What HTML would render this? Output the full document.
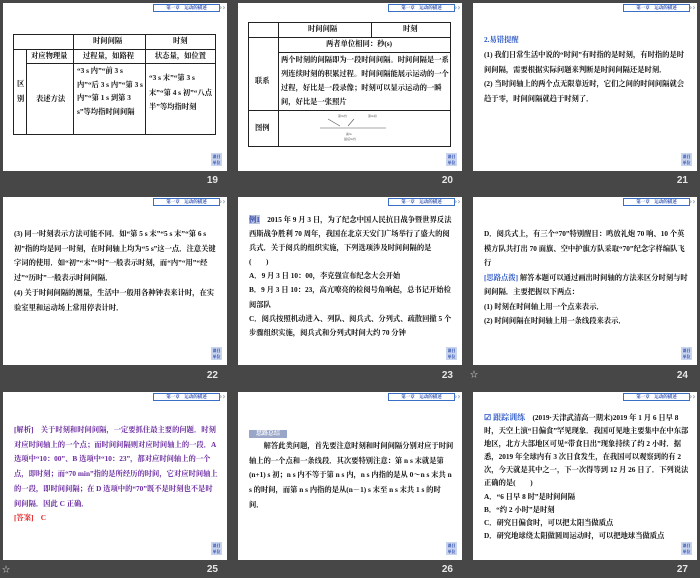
<!DOCTYPE html>
<html><head><meta charset="utf-8"><style>
*{margin:0;padding:0;box-sizing:border-box}
body{width:700px;height:578px;background:#474747;position:relative;overflow:hidden;font-family:"Liberation Serif","Noto Serif CJK SC","Noto Sans CJK SC",serif;}
.s{position:absolute;width:224px;height:168px;background:#fff;overflow:hidden;color:#111;font-weight:bold;font-size:7.3px}
.n{position:absolute;width:40px;text-align:right;color:#e8e8e8;font:bold 10px "Liberation Sans",sans-serif}
.bd{position:absolute;left:150px;top:1px;width:67px;height:8px;border:1px solid #3a6fc8;background:#fff;color:#2244aa;font-size:4.5px;line-height:6px;text-align:center}
.ch{position:absolute;left:216px;top:0px;color:#9ab;font-size:8px;line-height:9px;font-family:"DejaVu Sans",sans-serif}
.ic{position:absolute;left:208px;top:150px;width:11px;height:13px;background:#c9d4ee;color:#2244aa;font-size:4px;line-height:5.5px;text-align:center;padding-top:1px}
.t{position:absolute;line-height:14.7px}
.l{position:absolute;background:#222}
.p{color:#6a2aa0}
.b{color:#2a56c6}
.r{color:#e02020}
</style></head><body>

<!-- 19 -->
<div class="s" style="left:3px;top:3px">
<div class="bd">第一章　运动的描述</div><div class="ch">››</div><div class="ic">课目<br>单位</div>
<div style="position:absolute;left:10px;top:31px;width:203px;height:101px;border:1px solid #222"></div>
<div class="l" style="left:70px;top:31px;width:1px;height:101px"></div>
<div class="l" style="left:142px;top:31px;width:1px;height:101px"></div>
<div class="l" style="left:10px;top:46px;width:203px;height:1px"></div>
<div class="l" style="left:23px;top:60px;width:190px;height:1px"></div>
<div class="l" style="left:23px;top:46px;width:1px;height:86px"></div>
<div class="t" style="left:90px;top:31px">时间间隔</div>
<div class="t" style="left:170px;top:31px">时刻</div>
<div class="t" style="left:28px;top:46px">对应物理量</div>
<div class="t" style="left:80px;top:46px">过程量，如路程</div>
<div class="t" style="left:152px;top:46px">状态量，如位置</div>
<div class="t" style="left:14px;top:74px;width:8px">区<br>别</div>
<div class="t" style="left:33px;top:89px">表述方法</div>
<div class="t" style="left:74px;top:61px;width:68px;line-height:13.5px">“3 s 内”“前 3 s 内”“后 3 s 内”“第 3 s 内”“第 1 s 到第 3 s”等均指时间间隔</div>
<div class="t" style="left:146px;top:68px;width:66px;line-height:14.5px">“3 s 末”“第 3 s 末”“第 4 s 初”“八点半”等均指时刻</div>
</div>
<div class="n" style="left:178px;top:175px">19</div>

<!-- 20 -->
<div class="s" style="left:238px;top:3px">
<div class="bd">第一章　运动的描述</div><div class="ch">››</div><div class="ic">课目<br>单位</div>
<div style="position:absolute;left:10px;top:19px;width:203px;height:125px;border:1px solid #222"></div>
<div class="l" style="left:40px;top:19px;width:1px;height:125px"></div>
<div class="l" style="left:133px;top:19px;width:1px;height:15px"></div>
<div class="l" style="left:10px;top:34px;width:203px;height:1px"></div>
<div class="l" style="left:40px;top:49px;width:173px;height:1px"></div>
<div class="l" style="left:10px;top:107px;width:203px;height:1px"></div>
<div class="t" style="left:70px;top:19px">时间间隔</div>
<div class="t" style="left:165px;top:19px">时刻</div>
<div class="t" style="left:88px;top:34px">两者单位相同：秒(s)</div>
<div class="t" style="left:17px;top:71px">联系</div>
<div class="t" style="left:43px;top:50px;width:170px;line-height:14px">两个时刻的间隔即为一段时间间隔。时间间隔是一系列连续时刻的积累过程。时间间隔能展示运动的一个过程，好比是一段录像；时刻可以显示运动的一瞬间，好比是一张照片</div>
<div class="t" style="left:17px;top:118px">图例</div>
<svg style="position:absolute;left:80px;top:110px" width="70" height="32"><g stroke="#555" stroke-width=".6"><line x1="2" y1="15" x2="68" y2="15"/><line x1="10" y1="6" x2="22" y2="13"/><line x1="30" y1="13" x2="36" y2="6"/></g><g fill="#777" font-size="3"><text x="20" y="4">第3s内</text><text x="50" y="4">第4s初</text><text x="28" y="22">前3s</text><text x="26" y="27">最后3s内</text></g></svg>
</div>
<div class="n" style="left:413px;top:175px">20</div>

<!-- 21 -->
<div class="s" style="left:473px;top:3px">
<div class="bd">第一章　运动的描述</div><div class="ch">››</div><div class="ic">课目<br>单位</div>
<div class="t b" style="left:11px;top:30px">2.易错提醒</div>
<div class="t" style="left:11px;top:45px;width:205px">(1) 我们日常生活中说的“时间”有时指的是时刻，有时指的是时间间隔，需要根据实际问题来判断是时间间隔还是时刻．<br>(2) 当时间轴上的两个点无限靠近时，它们之间的时间间隔就会趋于零，时间间隔就趋于时刻了．</div>
</div>
<div class="n" style="left:648px;top:175px">21</div>

<!-- 22 -->
<div class="s" style="left:3px;top:197px">
<div class="bd">第一章　运动的描述</div><div class="ch">››</div><div class="ic">课目<br>单位</div>
<div class="t" style="left:11px;top:30px;width:205px">(3) 同一时刻表示方法可能不同．如“第 5 s 末”“5 s 末”“第 6 s 初”指的均是同一时刻，在时间轴上均为“5 s”这一点．注意关键字词的使用．如“初”“末”“时”一般表示时刻，而“内”“用”“经过”“历时”一般表示时间间隔．<br>(4) 关于时间间隔的测量，生活中一般用各种钟表来计时，在实验室里和运动场上常用停表计时．</div>
</div>
<div class="n" style="left:178px;top:370px">22</div>

<!-- 23 -->
<div class="s" style="left:238px;top:197px">
<div class="bd">第一章　运动的描述</div><div class="ch">››</div><div class="ic">课目<br>单位</div>
<div class="t" style="left:11px;top:16px;width:205px;line-height:14.1px"><span style="background:#b8c4e0;color:#34a">例1</span>　2015 年 9 月 3 日，为了纪念中国人民抗日战争暨世界反法西斯战争胜利 70 周年，我国在北京天安门广场举行了盛大的阅兵式．关于阅兵的组织实施，下列选项涉及时间间隔的是<br>(　　)<br>A．9 月 3 日 10：00，李克强宣布纪念大会开始<br>B．9 月 3 日 10：23，高亢嘹亮的检阅号角响起，总书记开始检阅部队<br>C．阅兵按照机动进入、列队、阅兵式、分列式、疏散回撤 5 个步骤组织实施，阅兵式和分列式时间大约 70 分钟</div>
</div>
<div class="n" style="left:413px;top:370px">23</div>

<!-- 24 -->
<div class="s" style="left:473px;top:197px">
<div class="bd">第一章　运动的描述</div><div class="ch">››</div><div class="ic">课目<br>单位</div>
<div class="t" style="left:11px;top:30px;width:205px;line-height:14.5px">D．阅兵式上，有三个“70”特别醒目：鸣放礼炮 70 响、10 个英模方队共打出 70 面旗、空中护旗方队采取“70”纪念字样编队飞行<br><span class="b">[思路点拨]</span> 解答本题可以通过画出时间轴的方法来区分时刻与时间间隔．主要把握以下两点：<br>(1) 时刻在时间轴上用一个点来表示．<br>(2) 时间间隔在时间轴上用一条线段来表示．</div>
</div>
<div class="n" style="left:648px;top:370px">24</div>

<!-- 25 -->
<div class="s" style="left:3px;top:392px">
<div class="bd">第一章　运动的描述</div><div class="ch">››</div><div class="ic">课目<br>单位</div>
<div class="t p" style="left:11px;top:31px;width:205px">[解析]　关于时刻和时间间隔，一定要抓住最主要的问题．时刻对应时间轴上的一个点；而时间间隔则对应时间轴上的一段．A 选项中“10：00”、B 选项中“10：23”，都对应时间轴上的一个点，即时刻；而“70 min”指的是所经历的时间，它对应时间轴上的一段，即时间间隔；在 D 选项中的“70”既不是时刻也不是时间间隔．因此 C 正确．<br><span class="r">[答案]　C</span></div>
</div>
<div class="n" style="left:178px;top:564px">25</div>

<!-- 26 -->
<div class="s" style="left:238px;top:392px">
<div class="bd">第一章　运动的描述</div><div class="ch">››</div><div class="ic">课目<br>单位</div>
<div style="position:absolute;left:11px;top:38px;width:38px;height:8px;background:#9aa6c8;color:#fff;font-size:6px;line-height:8px;text-align:center">思路总结</div>
<div class="t" style="left:11px;top:47px;width:205px">　　解答此类问题，首先要注意时刻和时间间隔分别对应于时间轴上的一个点和一条线段．其次要特别注意：第 n s 末就是第(n+1) s 初；n s 内不等于第 n s 内，n s 内指的是从 0～n s 末共 n s 的时间，而第 n s 内指的是从(n－1) s 末至 n s 末共 1 s 的时间．</div>
</div>
<div class="n" style="left:413px;top:564px">26</div>

<!-- 27 -->
<div class="s" style="left:473px;top:392px">
<div class="bd">第一章　运动的描述</div><div class="ch">››</div><div class="ic">课目<br>单位</div>
<div class="t" style="left:11px;top:19px;width:207px;line-height:13.1px"><span class="b" style="font-size:8px">☑ 跟踪训练</span>　(2019·天津武清高一期末)2019 年 1 月 6 日早 8 时，天空上演“日偏食”罕见现象．我国可见地主要集中在中东部地区，北方大部地区可见“带食日出”现象持续了约 2 小时．据悉，2019 年全球内有 3 次日食发生，在我国可以观察到的有 2 次，今天就是其中之一，下一次得等到 12 月 26 日了．下列说法正确的是(　　)<br>A．“6 日早 8 时”是时间间隔<br>B．“约 2 小时”是时刻<br>C．研究日偏食时，可以把太阳当做质点<br>D．研究地球绕太阳做圆周运动时，可以把地球当做质点</div>
</div>
<div class="n" style="left:648px;top:564px">27</div>

<div style="position:absolute;left:2px;top:564px;color:#ddd;font-size:8px">☆</div>
<div style="position:absolute;left:470px;top:369px;color:#ddd;font-size:8px">☆</div>
</body></html>
